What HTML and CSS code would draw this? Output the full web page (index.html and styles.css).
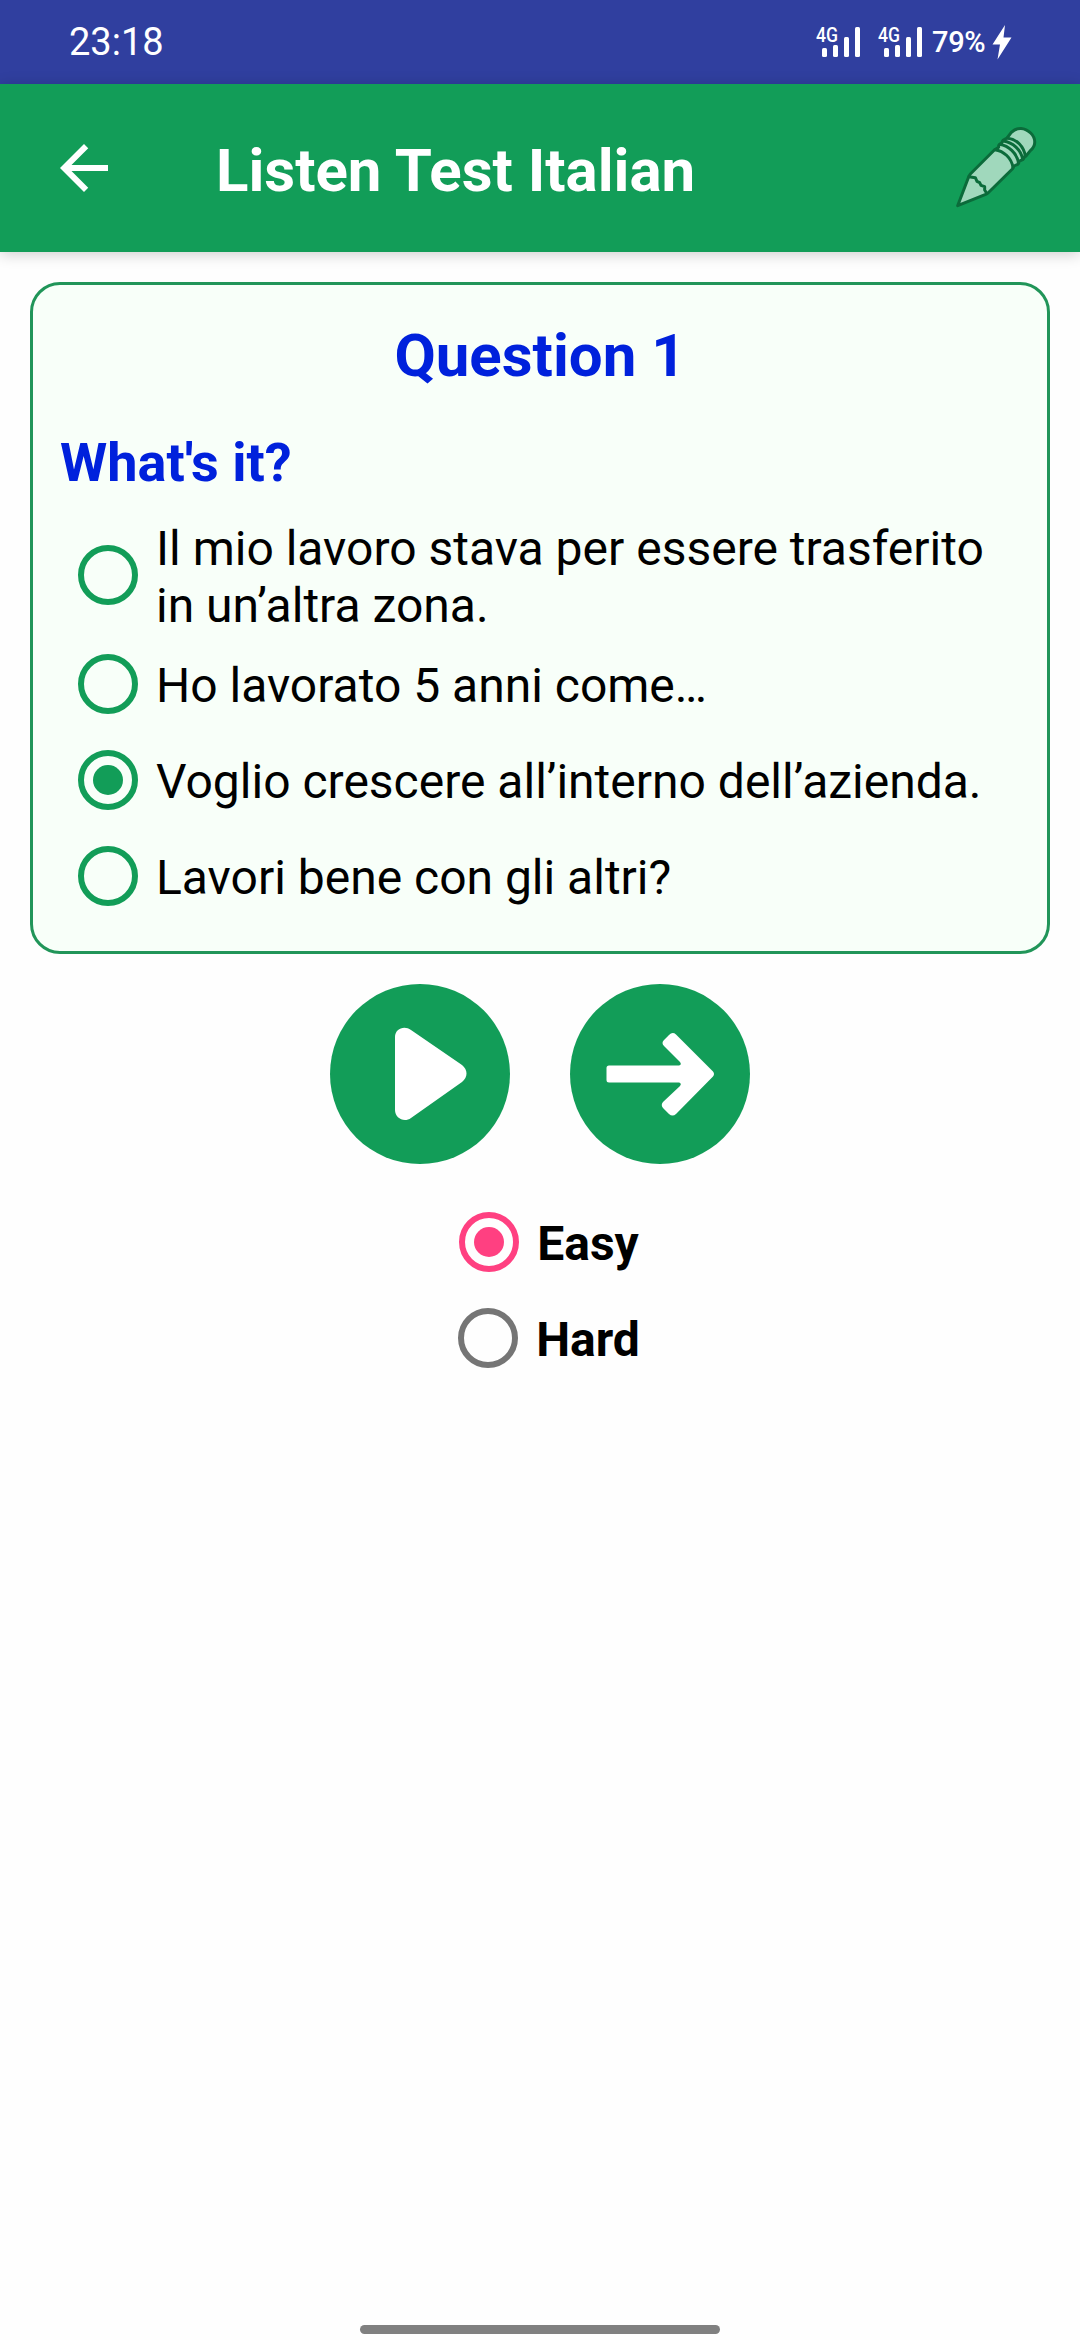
FILE: index.html
```html
<!DOCTYPE html>
<html lang="en">
<head>
    <meta charset="UTF-8"/>
    <meta name="viewport" content="width=device-width, initial-scale=1"/>
    <title>Listen Test Italian</title>
    <link rel="stylesheet" href="styles.css">
</head>
<body>

<!-- Status bar -->
<div class="status-bar">
    <span class="clock">23:18</span>
    <div class="status-icons">
        <svg class="signal" viewBox="-4 -8 54 48" aria-hidden="true">
            <text x="0" y="16" textLength="22" lengthAdjust="spacingAndGlyphs">4G</text>
            <rect x="6" y="22" width="5" height="9" rx="1.5"/>
            <rect x="17" y="19" width="5" height="12" rx="1.5"/>
            <rect x="28" y="11" width="5" height="20" rx="1.5"/>
            <rect x="39" y="1" width="5" height="30" rx="1.5"/>
        </svg>
        <svg class="signal" viewBox="-4 -8 54 48" aria-hidden="true">
            <text x="0" y="16" textLength="22" lengthAdjust="spacingAndGlyphs">4G</text>
            <rect x="6" y="22" width="5" height="9" rx="1.5"/>
            <rect x="17" y="19" width="5" height="12" rx="1.5"/>
            <rect x="28" y="11" width="5" height="20" rx="1.5"/>
            <rect x="39" y="1" width="5" height="30" rx="1.5"/>
        </svg>
        <span class="battery">79%</span>
        <svg class="bolt" viewBox="0 0 20 36" aria-hidden="true">
            <path d="M13 1L0.5 20.5H8L5.5 35.5L19.5 13.5H11.5Z"/>
        </svg>
    </div>
</div>

<!-- App bar -->
<header class="app-bar">
    <svg class="back" viewBox="0 0 24 24" aria-hidden="true">
        <path d="M20 11H7.83l5.59-5.59L12 4l-8 8 8 8 1.41-1.41L7.83 13H20v-2z"/>
    </svg>
    <h1>Listen Test Italian</h1>
    <svg class="pencil" viewBox="60 69 270 270" aria-hidden="true">
        <path d="M83 317L117 228L121 222L193 150L206 142L206 136L215 129L219 121L231 114L244 97C261 80 285 82 302 99C318 115 319 137 301 152L288 168L284 170L279 178L267 184L263 193L252 198L247 207L174 279L167 283Z"/>
        <path class="line" d="M117 230L136 233L141 244L149 248L153 256L164 260L164 270L170 280"/>
        <path class="line" d="M195 149C221 153 245 174 249 203M209 133C236 138 260 158 266 190M220 123C249 127 273 150 278 178M233 115C260 117 281 139 286 168"/>
    </svg>
</header>

<main>
    <section class="card">
        <h2>Question 1</h2>
        <h3>What's it?</h3>
        <div class="option tall"><i class="radio"></i><span>Il mio lavoro stava per essere trasferito in un’altra zona.</span></div>
        <div class="option"><i class="radio"></i><span>Ho lavorato 5 anni come…</span></div>
        <div class="option"><i class="radio checked"></i><span>Voglio crescere all’interno dell’azienda.</span></div>
        <div class="option"><i class="radio"></i><span>Lavori bene con gli altri?</span></div>
    </section>

    <div class="controls">
        <svg viewBox="0 0 180 180" role="img" aria-label="Play">
            <circle cx="90" cy="90" r="90"/>
            <path d="M65 53C65 45 74 41 81 46L132 81C138 86 138 93 132 98L81 134C74 139 65 134 65 126Z"/>
        </svg>
        <svg viewBox="0 0 180 180" role="img" aria-label="Next">
            <circle cx="90" cy="90" r="90"/>
            <path d="M39 81.500H109Q112 80.500 110 78L94 62Q91 59 94 56L99 51Q102.500 47.500 106 50.500L143 87.500Q145 90 143 92.500L106 130Q102.500 133 99 130L93 124Q90.500 121 93 118L110 102Q112 99.500 109 98.500H39Q36.500 98.500 36.500 96V84Q36.500 81.500 39 81.500Z"/>
        </svg>
    </div>

    <div class="level">
        <div class="option pink"><i class="radio checked"></i><span>Easy</span></div>
        <div class="option grey"><i class="radio"></i><span>Hard</span></div>
    </div>
</main>

<div class="home-bar"></div>

</body>
</html>
```
FILE: styles.css
```css
* {
  box-sizing: border-box;
}
body {
  margin: 0;
  height: 2340px;
  display: flex;
  flex-direction: column;
  font-family: Roboto, "Liberation Sans", sans-serif;
  background-color: #fefefe;
  color: #000;
}
h1, h2, h3 {
  margin: 0;
}
svg {
  display: block;
  flex: none;
}

/* Status bar */
.status-bar {
  height: 84px;
  padding: 0 68px 0 69px;
  display: flex;
  align-items: center;
  justify-content: space-between;
  background-color: #303f9f;
  color: #fff;
  fill: #fff;
}
.clock {
  font-size: 38px;
}
.status-icons {
  display: flex;
  align-items: center;
}
.signal {
  width: 54px;
  height: 48px;
  margin-right: 8px;
}
.signal text {
  font-size: 20px;
  font-weight: 500;
}
.battery {
  width: 56px;
  margin-left: -4px;
  font-size: 29px;
  font-weight: 500;
  letter-spacing: -0.3px;
  line-height: 36px;
}
.bolt {
  width: 20px;
  height: 36px;
  margin-left: 4px;
}

/* App bar */
.app-bar {
  height: 168px;
  padding: 0 40px 0 48px;
  display: flex;
  align-items: center;
  background-color: #129d58;
  color: #fff;
  box-shadow: 0 2px 14px rgba(0, 0, 0, 0.2);
}
.back {
  width: 72px;
  height: 72px;
  margin-right: 96px;
  fill: #fff;
}
.app-bar h1 {
  flex: 1;
  padding-top: 5px;
  font-size: 60px;
}
.pencil {
  width: 90px;
  height: 90px;
  fill: #a0d8bc;
  stroke: #0b6b3a;
  stroke-width: 9;
  stroke-linejoin: round;
  stroke-linecap: round;
}
.pencil .line {
  fill: none;
}

main {
  flex: 1;
  padding: 30px;
}

/* Question card */
.card {
  height: 672px;
  padding: 27px;
  border: 3px solid #219559;
  border-radius: 30px;
  background-color: #f8fff9;
}
.card h2, .card h3 {
  color: #0021dc;
}
.card h2 {
  height: 84px;
  line-height: 88px;
  font-size: 60px;
  text-align: center;
}
.card h3 {
  height: 118px;
  line-height: 133px;
  font-size: 54px;
}
.option {
  height: 96px;
  padding-left: 18px;
  display: flex;
  align-items: center;
  gap: 18px;
  font-size: 48px;
  line-height: 57px;
  color: #000;
}
.option span {
  padding-top: 2px;
}
.option.tall {
  height: 122px;
}
.option.tall span {
  padding-top: 4px;
}
.radio {
  flex: none;
  width: 60px;
  height: 60px;
  border: 6px solid #129d58;
  border-radius: 50%;
  display: grid;
  place-items: center;
}
.radio.checked::after {
  content: "";
  width: 30px;
  height: 30px;
  border-radius: 50%;
  background-color: #129d58;
}

/* Play and next buttons */
.controls {
  padding-top: 30px;
  display: flex;
  justify-content: center;
  gap: 60px;
}
.controls svg {
  width: 180px;
  height: 180px;
}
.controls circle {
  fill: #129d58;
}
.controls path {
  fill: #fff;
}

/* Difficulty */
.level {
  padding-top: 30px;
  display: flex;
  flex-direction: column;
  align-items: center;
  font-weight: bold;
}
.pink .radio {
  border-color: #ff4081;
}
.pink .radio::after {
  background-color: #ff4081;
}
.grey .radio {
  border-color: #757575;
}

.home-bar {
  width: 360px;
  height: 9px;
  margin: 0 auto 6px;
  border-radius: 5px;
  background-color: #808080;
}
```
